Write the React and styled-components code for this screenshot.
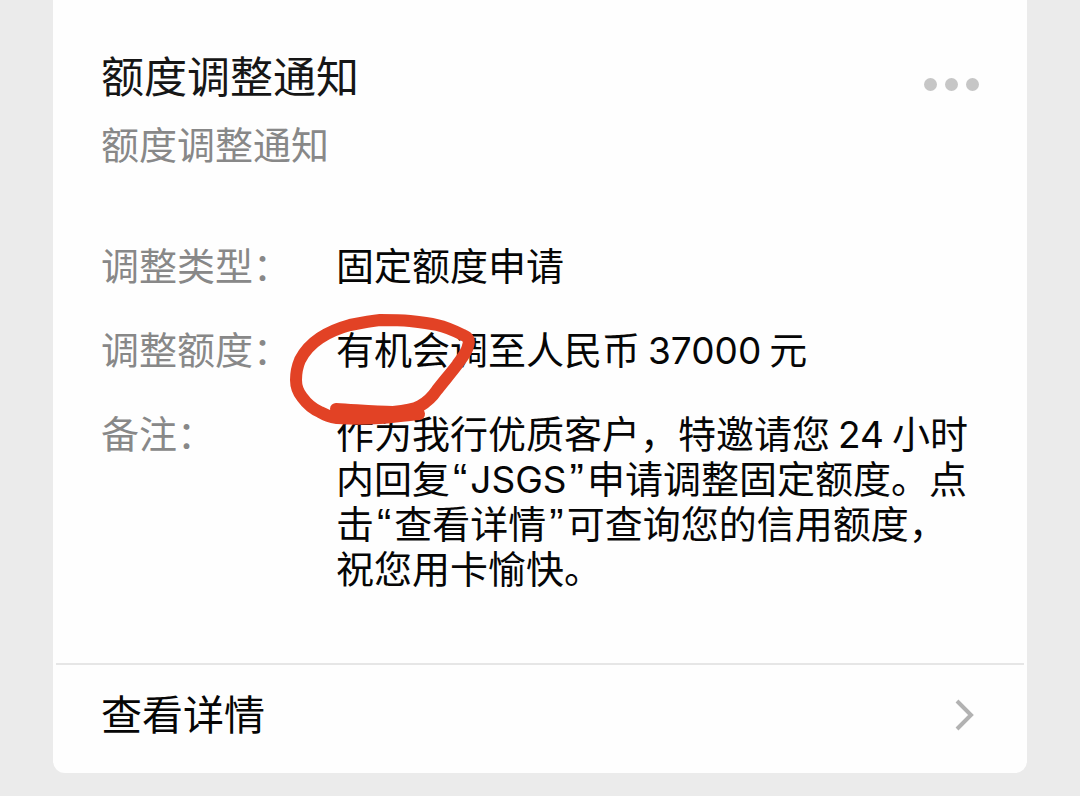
import React from 'react';
import styled, { createGlobalStyle } from 'styled-components';

export default function App() {
  return (
    <Page>
      <GlobalStyle />
      <Card>
        <Body>
          <Header>
            <div>
              <Title>额度调整通知</Title>
              <Subtitle>额度调整通知</Subtitle>
            </div>
            <MoreButton type="button" aria-label="更多">
              <Dot />
              <Dot />
              <Dot />
            </MoreButton>
          </Header>
          <Details>
            <Label>调整类型：</Label>
            <Value>固定额度申请</Value>
            <Label>调整额度：</Label>
            <Value>
              有机会调至人民币<Latin>37000</Latin>元
              <Scribble />
            </Value>
            <Label>备注：</Label>
            <Value>
              作为我行优质客户，特邀请您<Latin>24</Latin>小时内回复<Quote>“</Quote>
              <Latin $tight>JSGS</Latin>
              <Quote>”</Quote>申请调整固定额度。点击<Quote>“</Quote>查看详情<Quote>”</Quote>
              可查询您的信用额度，祝您用卡愉快。
            </Value>
          </Details>
        </Body>
        <Footer href="#details">
          查看详情
          <Chevron />
        </Footer>
      </Card>
    </Page>
  );
}

// Hand-drawn red marker around the first words of the amount
function Scribble() {
  return (
    <Marker width="196" height="120" viewBox="0 0 196 120" aria-hidden="true">
      <path d="M50 99 C70 100 88 102 107 102 C118 101 127 100 134 96 C141 92 147 86 151 80 C158 71 165 63 171 55 C176 48 181 42 182 36 C184 30 182 27 177 25 C169 21 160 17 151 15 C142 13 133 12 124 11 C114 10 104 10 94 10 C84 11 74 13 64 15 C53 18 43 22 34 28 C25 34 18 42 14 50 C11 57 10 63 10 70 C10 77 12 82 16 87 C21 94 27 99 34 102 C39 105 45 107 51 108 C65 109 80 109 94 108 C108 107 121 105 133 104" />
    </Marker>
  );
}

function Chevron() {
  return (
    <svg width="24" height="34" viewBox="0 0 24 34" fill="none" stroke="#b2b2b2" strokeWidth="4" aria-hidden="true">
      <path d="M2 3 L16 17 L2 31" />
    </svg>
  );
}

const GlobalStyle = createGlobalStyle`
  * {
    box-sizing: border-box;
  }

  body {
    margin: 0;
    background-color: #ebebeb;
    font-family: Inter, "Noto Sans CJK SC", sans-serif;
  }
`;

const Page = styled.main`
  padding: 0 53px 22px;
`;

const Card = styled.article`
  background-color: #fefefe;
  border-radius: 0 0 12px 12px;
`;

const Body = styled.div`
  padding: 47px 48px 71px;
`;

const Header = styled.header`
  display: flex;
  justify-content: space-between;
  align-items: flex-start;
  margin-bottom: 76px;
`;

const Title = styled.h1`
  margin: 0 0 16px;
  font-size: 43px;
  font-weight: 400;
  line-height: 60px;
  color: #161616;
`;

const Subtitle = styled.p`
  margin: 0;
  font-size: 38px;
  line-height: 45px;
  color: #888;
`;

const MoreButton = styled.button`
  display: flex;
  gap: 8px;
  padding: 31px 0;
  border: none;
  background: none;
  cursor: pointer;
`;

const Dot = styled.span`
  width: 13px;
  height: 13px;
  border-radius: 50%;
  background-color: #c6c6c6;
`;

const Details = styled.dl`
  display: grid;
  grid-template-columns: 235px 1fr;
  row-gap: 39px;
  margin: 0;
  font-size: 38px;
  line-height: 45px;
`;

const Label = styled.dt`
  color: #888;
`;

const Value = styled.dd`
  position: relative;
  margin: 0;
  color: #060606;
`;

const Latin = styled.span`
  margin: 0 ${({ $tight }) => ($tight ? '0' : '8px')};
  font-size: 37px;
  line-height: 1;
`;

const Quote = styled.span`
  margin: 0 3px;
  font-family: "Liberation Sans", sans-serif;
  font-size: 43px;
  line-height: 1;
`;

const Marker = styled.svg`
  position: absolute;
  z-index: 1;
  top: -18px;
  left: -50px;
  fill: none;
  stroke: #e24225;
  stroke-width: 12;
  stroke-linecap: round;
  stroke-linejoin: round;
  pointer-events: none;
`;

const Footer = styled.a`
  display: flex;
  justify-content: space-between;
  align-items: center;
  margin: 0 3px;
  padding: 20px 45px 28px;
  border-top: 2px solid #e6e6e6;
  font-size: 41px;
  line-height: 60px;
  color: #060606;
  text-decoration: none;
`;
